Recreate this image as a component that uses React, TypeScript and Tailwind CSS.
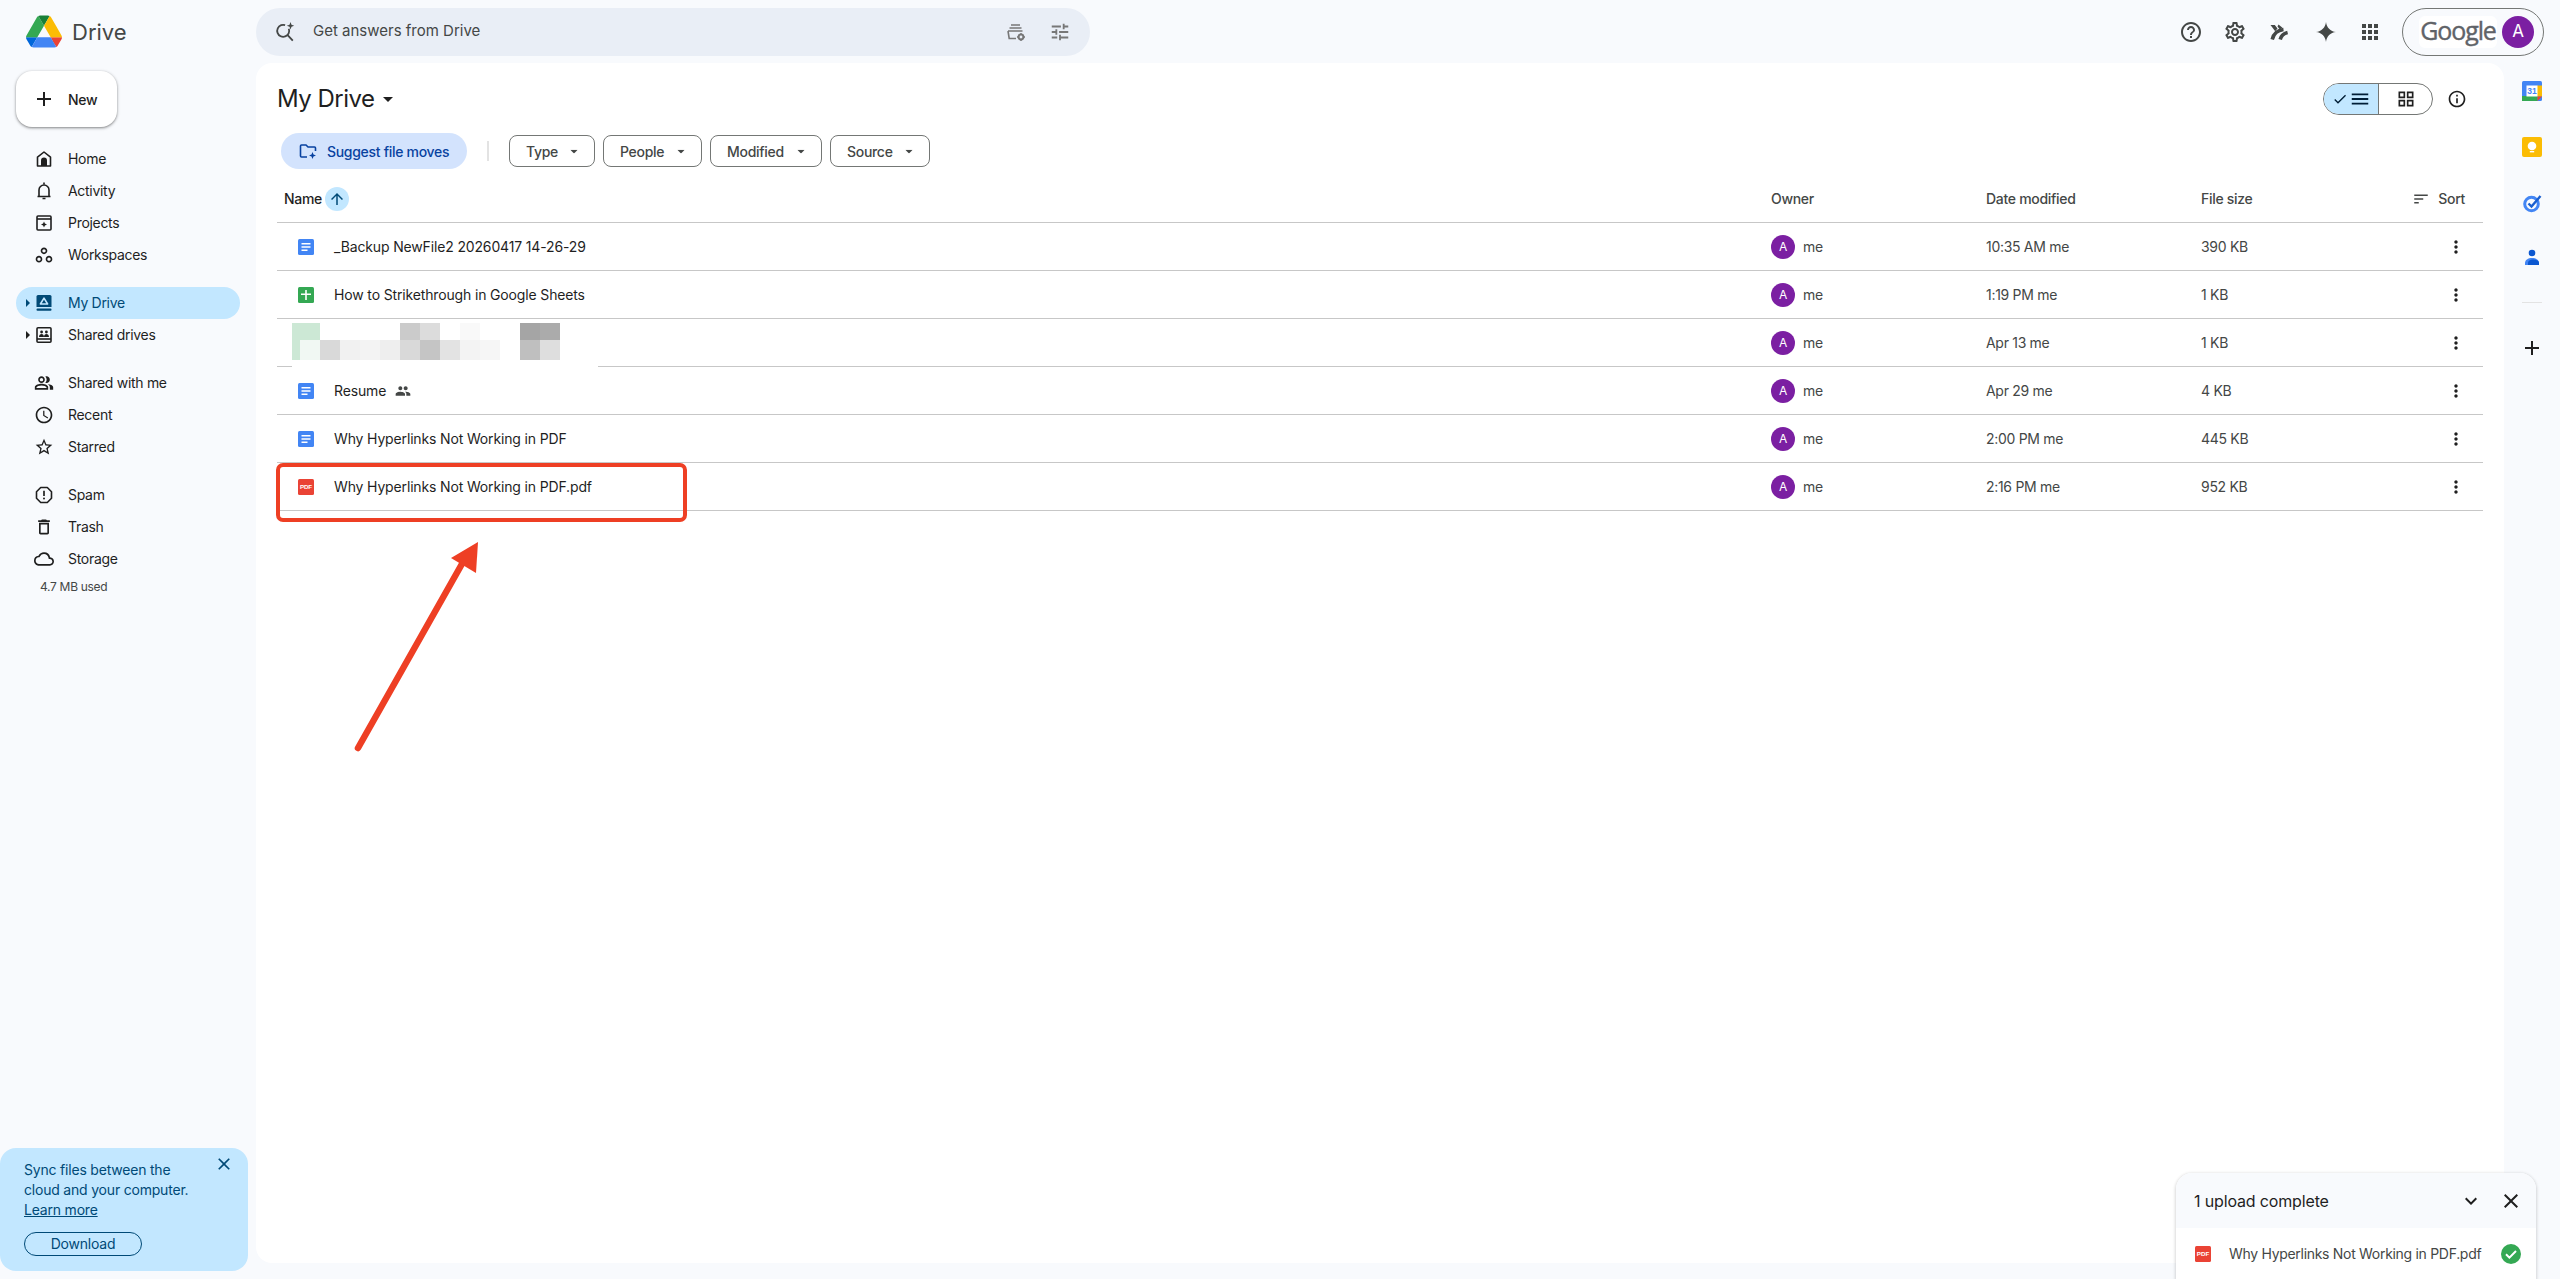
import React from "react";
import {
  MdOutlineWorkspaces, MdOutlinePeopleAlt, MdOutlineAccessTime, MdStarBorder, MdOutlineDelete, MdOutlineCloud,
  MdHelpOutline, MdOutlineSettings, MdApps, MdOutlineTune, MdAdd, MdClose, MdMoreVert, MdArrowUpward, MdCheck,
  MdMenu, MdOutlineGridView, MdInfoOutline, MdKeyboardArrowDown, MdPeople, MdSort,
} from "react-icons/md";

const font = "font-['Inter','Liberation_Sans',sans-serif]";

function Caret({ className = "" }: { className?: string }) {
  return (
    <svg width="10" height="5" viewBox="0 0 10 5" className={className}>
      <path d="M0 0h10L5 5z" fill="currentColor" />
    </svg>
  );
}

function DriveLogo() {
  return (
    <svg width="36" height="33" viewBox="0 0 87.3 78">
      <path d="m6.6 66.85 3.85 6.65c.8 1.4 1.95 2.5 3.3 3.3l13.75-23.8h-27.5c0 1.55.4 3.1 1.2 4.5z" fill="#0066da" />
      <path d="m43.65 25-13.75-23.8c-1.35.8-2.5 1.9-3.3 3.3l-25.4 44a9.06 9.06 0 0 0 -1.2 4.5h27.5z" fill="#34a853" />
      <path d="m73.55 76.8c1.35-.8 2.5-1.9 3.3-3.3l1.6-2.75 7.65-13.25c.8-1.4 1.2-2.95 1.2-4.5h-27.502l5.852 11.5z" fill="#ea4335" />
      <path d="m43.65 25 13.75-23.8c-1.35-.8-2.9-1.2-4.5-1.2h-18.5c-1.6 0-3.15.45-4.5 1.2z" fill="#188038" />
      <path d="m59.8 53h-32.3l-13.75 23.8c1.35.8 2.9 1.2 4.5 1.2h50.8c1.6 0 3.15-.45 4.5-1.2z" fill="#4285f4" />
      <path d="m73.4 26.5-12.7-22c-.8-1.4-1.95-2.5-3.3-3.3l-13.75 23.8 16.15 28h27.45c0-1.55-.4-3.1-1.2-4.5z" fill="#fbbc04" />
    </svg>
  );
}

function HomeIcon() {
  return (
    <svg width="20" height="20" viewBox="0 0 20 20" fill="none">
      <path d="M3.5 17V8.2L10 3l6.5 5.2V17z" stroke="#1f1f1f" strokeWidth="1.6" strokeLinejoin="round" />
      <path d="M7 17v-5.5a3 3 0 0 1 6 0V17z" fill="#1f1f1f" />
    </svg>
  );
}
function BellIcon() {
  return (
    <svg width="20" height="20" viewBox="0 0 20 20" fill="none">
      <path d="M5 15V9a5 5 0 0 1 10 0v6M3.5 15.5h13" stroke="#1f1f1f" strokeWidth="1.6" />
      <path d="M10 1.5v2M8.5 17.5h3" stroke="#1f1f1f" strokeWidth="1.6" />
    </svg>
  );
}
function ProjectsIcon() {
  return (
    <svg width="20" height="20" viewBox="0 0 20 20" fill="none">
      <rect x="3" y="3" width="14" height="14" rx="1" stroke="#1f1f1f" strokeWidth="1.6" />
      <path d="M3 6h14" stroke="#1f1f1f" strokeWidth="1.6" />
      <path d="M10 8.5l.9 2.1 2.1.9-2.1.9-.9 2.1-.9-2.1-2.1-.9 2.1-.9z" fill="#1f1f1f" />
    </svg>
  );
}
function MyDriveIcon() {
  return (
    <svg width="20" height="20" viewBox="0 0 20 20">
      <path d="M4 2h12a1.5 1.5 0 0 1 1.5 1.5V14H2.5V3.5A1.5 1.5 0 0 1 4 2z" fill="#004a77" />
      <rect x="2.5" y="15.5" width="15" height="2.2" rx="1" fill="#004a77" />
      <path d="M10 5.2l3.6 5.8H6.4z" fill="none" stroke="#c2e7ff" strokeWidth="1.6" strokeLinejoin="round" />
    </svg>
  );
}
function SharedDrivesIcon() {
  return (
    <svg width="20" height="20" viewBox="0 0 20 20" fill="none">
      <rect x="3" y="2.8" width="14" height="14.4" rx="1" stroke="#1f1f1f" strokeWidth="1.6" />
      <path d="M3 14h14" stroke="#1f1f1f" strokeWidth="1.6" />
      <circle cx="7.6" cy="7" r="1.4" fill="#1f1f1f" />
      <circle cx="12.4" cy="7" r="1.4" fill="#1f1f1f" />
      <path d="M5 12c0-2 1.2-3 2.6-3s2.4 1 2.4 3zM10 12c0-2 1-3 2.4-3S15 10 15 12z" fill="#1f1f1f" />
    </svg>
  );
}
function SpamIcon() {
  return (
    <svg width="20" height="20" viewBox="0 0 20 20" fill="none">
      <path d="M6.7 2.5h6.6l4.2 4.2v6.6l-4.2 4.2H6.7l-4.2-4.2V6.7z" stroke="#1f1f1f" strokeWidth="1.6" strokeLinejoin="round" />
      <path d="M10 5.8v5.2" stroke="#1f1f1f" strokeWidth="1.7" />
      <circle cx="10" cy="13.6" r="1" fill="#1f1f1f" />
    </svg>
  );
}
function SearchSpark() {
  return (
    <svg width="22" height="22" viewBox="0 0 22 22" fill="none">
      <circle cx="9.200" cy="9.800" r="6" stroke="#444746" strokeWidth="1.800" strokeDasharray="31.500 6.200" transform="rotate(-20 9.200 9.800)" />
      <path d="M13.600 14.200l5.200 5.400" stroke="#444746" strokeWidth="1.800" />
      <path d="M16.500 1l1 2.700 2.700 1-2.700 1-1 2.800-1-2.800-2.700-1 2.700-1z" fill="#444746" />
    </svg>
  );
}
function StorageGear() {
  return (
    <svg width="20" height="20" viewBox="0 0 20 20" fill="none">
      <path d="M5 3h9M3.500 6h12" stroke="#777" strokeWidth="1.500" />
      <path d="M2 9h14.500M2 9l1.200 7.500H10" stroke="#777" strokeWidth="1.600" />
      <circle cx="15" cy="15" r="2.400" stroke="#777" strokeWidth="2" />
      <path d="M15 11v1.200M15 17.800V19M11 15h1.200M17.800 15H19" stroke="#777" strokeWidth="1.400" />
    </svg>
  );
}
function SparkIcon() {
  return (
    <svg width="20" height="20" viewBox="0 0 20 20">
      <path d="M10 0c.6 5.6 4.4 9.4 10 10-5.6.6-9.4 4.4-10 10-.6-5.6-4.4-9.4-10-10C5.600 9.400 9.400 5.600 10 0z" fill="#444746" />
    </svg>
  );
}
function LabsIcon() {
  return (
    <svg width="20" height="20" viewBox="0 0 20 20" fill="none">
      <path d="M3.200 17.500C4.500 12 8.500 8.200 14.500 7.500" stroke="#444746" strokeWidth="3.600" />
      <path d="M11.200 17.500C12 14 14.500 11.500 18.600 10.500" stroke="#444746" strokeWidth="3.600" />
      <path d="M1.500 3h4.300l2.700 3.500-2.300 2.800zM9.500 2.500l4 3.300-2.700 1.700L8.500 4.600z" fill="#444746" />
    </svg>
  );
}
function SuggestIcon() {
  return (
    <svg width="20" height="20" viewBox="0 0 20 20" fill="none">
      <path d="M9 16H3.500a1 1 0 0 1-1-1V5a1 1 0 0 1 1-1h4.500l2 2H16.500a1 1 0 0 1 1 1v3" stroke="#0842a0" strokeWidth="1.600" />
      <path d="M14.500 11l1 2.500 2.500 1-2.500 1-1 2.500-1-2.500-2.500-1 2.500-1z" fill="#0842a0" />
    </svg>
  );
}
function FileIcon({ kind }: { kind: "doc" | "sheet" | "pdf" }) {
  if (kind === "doc")
    return (
      <svg width="16" height="16" viewBox="0 0 16 16" className="shrink-0">
        <rect width="16" height="16" rx="1.500" fill="#4285f4" />
        <path d="M3.500 4h9v1.600h-9zM3.500 7.200h9v1.600h-9zM3.500 10.400h6v1.600h-6z" fill="#fff" />
      </svg>
    );
  if (kind === "sheet")
    return (
      <svg width="16" height="16" viewBox="0 0 16 16" className="shrink-0">
        <rect width="16" height="16" rx="1.500" fill="#34a853" />
        <path d="M7.200 3h1.600v3.500H13v1.600H8.800V13H7.200V8.100H3V6.500h4.200z" fill="#fff" />
      </svg>
    );
  return (
    <svg width="16" height="16" viewBox="0 0 16 16" className="shrink-0">
      <rect width="16" height="16" rx="1.500" fill="#ea4335" />
      <text x="8" y="10.200" textAnchor="middle" fontSize="6.200" fontWeight="800" fill="#fff" fontFamily="Liberation Sans, sans-serif">PDF</text>
    </svg>
  );
}

function Avatar() {
  return (
    <div className={`${font} w-6 h-6 rounded-full bg-[#7b1fa2] text-white text-[12px] flex items-center justify-center`}>A</div>
  );
}

const navGroups: { icon: React.ReactNode; label: string; caret?: boolean; active?: boolean }[][] = [
  [
    { icon: <HomeIcon />, label: "Home" },
    { icon: <BellIcon />, label: "Activity" },
    { icon: <ProjectsIcon />, label: "Projects" },
    { icon: <MdOutlineWorkspaces size={20} color="#1f1f1f" />, label: "Workspaces" },
  ],
  [
    { icon: <MyDriveIcon />, label: "My Drive", caret: true, active: true },
    { icon: <SharedDrivesIcon />, label: "Shared drives", caret: true },
  ],
  [
    { icon: <MdOutlinePeopleAlt size={20} color="#1f1f1f" />, label: "Shared with me" },
    { icon: <MdOutlineAccessTime size={20} color="#1f1f1f" />, label: "Recent" },
    { icon: <MdStarBorder size={20} color="#1f1f1f" />, label: "Starred" },
  ],
  [
    { icon: <SpamIcon />, label: "Spam" },
    { icon: <MdOutlineDelete size={20} color="#1f1f1f" />, label: "Trash" },
    { icon: <MdOutlineCloud size={20} color="#1f1f1f" />, label: "Storage" },
  ],
];

const files: { kind: "doc" | "sheet" | "pdf"; name?: string; date: string; size: string; shared?: boolean }[] = [
  { kind: "doc", name: "_Backup NewFile2 20260417 14-26-29", date: "10:35 AM me", size: "390 KB" },
  { kind: "sheet", name: "How to Strikethrough in Google Sheets", date: "1:19 PM me", size: "1 KB" },
  { kind: "sheet", date: "Apr 13 me", size: "1 KB" },
  { kind: "doc", name: "Resume", date: "Apr 29 me", size: "4 KB", shared: true },
  { kind: "doc", name: "Why Hyperlinks Not Working in PDF", date: "2:00 PM me", size: "445 KB" },
  { kind: "pdf", name: "Why Hyperlinks Not Working in PDF.pdf", date: "2:16 PM me", size: "952 KB" },
];

const mosaicTop: [number, string][] = [
  [28, "bg-[#cce8d5]"], [80, "bg-white"], [20, "bg-[#cbcbcb]"], [20, "bg-[#dcdcdc]"], [20, "bg-white"],
  [20, "bg-[#f9f9f9]"], [40, "bg-white"], [20, "bg-[#a5a5a5]"], [20, "bg-[#ababab]"],
];
const mosaicBottom: [number, string][] = [
  [8, "bg-[#cce8d5]"], [20, "bg-[#f1f8f3]"], [20, "bg-[#d9d9d9]"], [20, "bg-[#f1f1f1]"], [20, "bg-[#f3f3f3]"],
  [20, "bg-[#eeeeee]"], [20, "bg-[#d9d9d9]"], [20, "bg-[#c5c5c5]"], [20, "bg-[#e3e3e3]"], [20, "bg-[#f3f3f3]"],
  [20, "bg-[#f6f6f6]"], [20, "bg-white"], [20, "bg-[#bfbfbf]"], [20, "bg-[#dedede]"],
];

function Mosaic() {
  return (
    <div className="relative h-full">
      <div className="absolute left-[15px] top-0 w-[306px] h-[48px] bg-white pt-[4px] z-10">
        <div className="flex h-[17px]">
          {mosaicTop.map(([w, c], i) => <div key={i} className={c} style={{ width: w }} />)}
        </div>
        <div className="flex h-[20px]">
          {mosaicBottom.map(([w, c], i) => <div key={i} className={c} style={{ width: w }} />)}
        </div>
      </div>
    </div>
  );
}

const chips: [string, string][] = [["Type", "w-[86px]"], ["People", "w-[99px]"], ["Modified", "w-[112px]"], ["Source", "w-[100px]"]];

const rowGrid = "grid grid-cols-[1fr_215px_215px_282px] items-center";

export default function App() {
  return (
    <div className={`${font} relative w-full h-[1279px] overflow-hidden bg-[#f8fafd] text-[#1f1f1f] flex flex-col`}>
      {/* top bar */}
      <header className="h-[63px] shrink-0 flex items-center">
        <div className="w-[256px] shrink-0 flex items-center pl-[26px] gap-[10px]">
          <DriveLogo />
          <span className="text-[22px] text-[#444746] leading-none">Drive</span>
        </div>
        <div className="w-[834px] h-[48px] rounded-full bg-[#e9eef6] flex items-center pl-[18px] pr-[19px]">
          <SearchSpark />
          <span className="ml-[17px] text-[15px] text-[#444746]">Get answers from Drive</span>
          <div className="ml-auto flex items-center gap-[23px]">
            <StorageGear />
            <MdOutlineTune size={22} color="#777" />
          </div>
        </div>
        <div className="ml-auto flex items-center pr-[16px]">
          <div className="flex items-center gap-[20px] mr-[20px]">
            <MdHelpOutline size={24} color="#444746" />
            <MdOutlineSettings size={24} color="#444746" />
            <div className="w-[24px] flex justify-center"><LabsIcon /></div>
            <div className="w-[24px] flex justify-center ml-[3px]"><SparkIcon /></div>
            <MdApps size={24} color="#444746" />
          </div>
          <div className="w-[142px] h-[48px] rounded-full border border-[#747775] flex items-center pl-[16px] gap-[5px]">
            <div className="w-[78px] h-[32px] bg-white rounded-md flex items-center justify-center pb-[3px]">
              <span className="font-['Open_Sans',sans-serif] text-[25px] tracking-[-1.100px] text-[#5f6368] leading-none [-webkit-text-stroke:0.4px_#5f6368]">Google</span>
            </div>
            <div className="w-8 h-8 rounded-full bg-[#7b1fa2] text-white text-[17px] flex items-center justify-center">A</div>
          </div>
        </div>
      </header>

      <div className="flex-1 flex min-h-0">
        {/* sidebar */}
        <aside className="w-[256px] shrink-0 flex flex-col pb-[8px]">
          <button className="ml-[16px] mt-[8px] w-[101px] h-[56px] rounded-2xl bg-white shadow-[0_1px_3px_1px_rgba(0,0,0,0.15),0_1px_2px_rgba(0,0,0,0.3)] flex items-center pl-[16px] gap-[12px] text-[14px] font-medium tracking-[-0.300px] text-[#1f1f1f]">
            <MdAdd size={24} />
            New
          </button>
          <nav className="mt-[16px] flex flex-col gap-[16px]">
            {navGroups.map((group, i) => (
              <div key={i} className="flex flex-col">
                {group.map((item) => (
                  <div
                    key={item.label}
                    className={`relative ml-[16px] w-[224px] h-[32px] rounded-full flex items-center pl-[18px] gap-[14px] text-[14px] tracking-[-0.300px] ${item.active ? "bg-[#c2e7ff] text-[#004a77]" : "text-[#1f1f1f]"}`}
                  >
                    {item.caret && (
                      <svg width="4" height="8" viewBox="0 0 4 8" className="absolute left-[10px] top-[12px]">
                        <path d="M0 0l4 4-4 4z" fill={item.active ? "#004a77" : "#1f1f1f"} />
                      </svg>
                    )}
                    {item.icon}
                    <span className="pb-[1px]">{item.label}</span>
                  </div>
                ))}
              </div>
            ))}
          </nav>
          <div className="ml-[40px] mt-[2px] text-[12px] leading-[20px] tracking-[-0.300px] text-[#444746]">4.7 MB used</div>

          <div className="mt-auto w-[248px] h-[123px] bg-[#c2e7ff] rounded-2xl pl-[24px] pt-[12px] relative text-[#004a77] text-[14px] leading-[20px] tracking-[-0.200px]">
            <MdClose size={20} className="absolute right-[14px] top-[6px]" />
            <div>Sync files between the</div>
            <div>cloud and your computer.</div>
            <div className="underline">Learn more</div>
            <button className="mt-[12px] w-[118px] h-[24px] rounded-full border border-[#004a77] flex items-center justify-center">Download</button>
          </div>
        </aside>

        {/* main */}
        <main className="flex-1 min-w-0 bg-white rounded-2xl mb-[16px] px-[21px] pt-[16px]">
          <div className="h-[40px] flex items-center">
            <h1 className="text-[24px] tracking-[-0.500px] font-normal leading-none text-[#1f1f1f]">My Drive</h1>
            <Caret className="ml-[8px] text-[#1f1f1f]" />
            <div className="ml-auto flex items-center">
              <div className="flex w-[110px] h-[32px] rounded-full border border-[#747775] overflow-hidden">
                <div className="w-[55px] bg-[#c2e7ff] border-r border-[#747775] flex items-center justify-center text-[#001d35] gap-[1px]">
                  <MdCheck size={16} />
                  <MdMenu size={22} />
                </div>
                <div className="flex-1 flex items-center justify-center text-[#1f1f1f]">
                  <MdOutlineGridView size={20} />
                </div>
              </div>
              <MdInfoOutline size={20} className="ml-[14px] mr-[16px]" />
            </div>
          </div>

          <div className="mt-[14px] h-[36px] flex items-center pl-[4px]">
            <button className="w-[186px] h-[36px] rounded-full bg-[#d3e3fd] flex items-center pl-[17px] gap-[9px] text-[14px] font-medium tracking-[-0.300px] text-[#0842a0]">
              <SuggestIcon />
              Suggest file moves
            </button>
            <div className="ml-[20px] w-[2px] h-[20px] bg-[#e3e3e3]" />
            <div className="ml-[20px] flex gap-[8px]">
              {chips.map(([c, w]) => (
                <div key={c} className={`${w} h-[32px] rounded-lg border border-[#747775] flex items-center justify-between pl-[16px] pr-[15px] text-[14px] font-medium tracking-[-0.300px] text-[#444746]`}>
                  {c}
                  <Caret className="scale-75" />
                </div>
              ))}
            </div>
          </div>

          <div className={`${rowGrid} mt-[7px] h-[47px] border-b border-[#c7c7c7] text-[14px] font-medium tracking-[-0.300px] text-[#444746]`}>
            <div className="flex items-center pl-[7px] text-[#1f1f1f]">
              <span className="pb-[1px]">Name</span>
              <span className="ml-[3px] w-[24px] h-[24px] shrink-0 rounded-full bg-[#c2e7ff] flex items-center justify-center text-[#004a77]">
                <MdArrowUpward size={18} />
              </span>
            </div>
            <div className="pb-[1px]">Owner</div>
            <div className="pb-[1px]">Date modified</div>
            <div className="flex items-center justify-end pr-[18px] pb-[1px]">
              <span className="mr-auto">File size</span>
              <MdSort size={18} />
              <span className="ml-[8px]">Sort</span>
            </div>
          </div>

          {files.map((f, i) => (
            <div key={i} className={`${rowGrid} relative h-[48px] border-b border-[#c7c7c7] text-[14px] tracking-[-0.300px] text-[#444746]`}>
              {f.name ? (
                <div className="flex items-center pl-[21px] gap-[20px] tracking-[-0.150px] text-[#1f1f1f]">
                  <FileIcon kind={f.kind} />
                  <span>{f.name}</span>
                  {f.shared && <MdPeople size={16} className="-ml-[11px] text-[#444746]" />}
                </div>
              ) : (
                <Mosaic />
              )}
              <div className="flex items-center gap-[8px]"><Avatar /><span>me</span></div>
              <div>{f.date}</div>
              <div className="flex items-center justify-between pr-[17px]">
                <span>{f.size}</span>
                <MdMoreVert size={20} className="text-[#1f1f1f]" />
              </div>
            </div>
          ))}
        </main>

        {/* right rail */}
        <aside className="w-[56px] shrink-0 flex flex-col items-center pt-[18px]">
          <svg width="20" height="20" viewBox="0 0 20 20">
            <rect width="20" height="20" rx="1.500" fill="#4285f4" />
            <rect x="15" y="4.500" width="5" height="11" fill="#fbbc04" />
            <rect y="15" width="15.500" height="5" fill="#34a853" />
            <path d="M15.500 15.500H20L15.500 20z" fill="#ea4335" />
            <rect x="4.500" y="4.500" width="11" height="11" fill="#fff" />
            <text x="10" y="13.200" textAnchor="middle" fontSize="8.500" fontWeight="700" fill="#4285f4" fontFamily="Liberation Sans, sans-serif">31</text>
          </svg>
          <svg width="20" height="20" viewBox="0 0 20 20" className="mt-[36px]">
            <rect width="20" height="20" rx="2" fill="#fbbc04" />
            <circle cx="10" cy="9" r="4.300" fill="#fff" />
            <rect x="7.800" y="14" width="4.400" height="1.400" fill="#fff" />
          </svg>
          <svg width="20" height="20" viewBox="0 0 20 20" className="mt-[36px]">
            <circle cx="9.500" cy="11" r="6.800" fill="none" stroke="#4285f4" strokeWidth="3" />
            <path d="M6.500 10.500l3 3L18.500 3" fill="none" stroke="#1a5fd0" strokeWidth="2.400" />
          </svg>
          <svg width="20" height="20" viewBox="0 0 20 20" className="mt-[35px]">
            <circle cx="10" cy="5" r="3.300" fill="#0b57d0" />
            <path d="M3 17v-2c0-3 3-5 7-5s7 2 7 5v2z" fill="#4285f4" />
            <path d="M6 17v-2c0-2 2-3.500 5-3.500 2 0 6 .5 6 3.500v2z" fill="#0b57d0" />
          </svg>
          <div className="mt-[34px] w-[20px] h-px bg-[#e3e3e3]" />
          <MdAdd size={24} className="mt-[33px] text-[#1f1f1f]" />
        </aside>
      </div>

      {/* upload panel */}
      <div className="absolute left-[2176px] top-[1173px] w-[360px] h-[106px] rounded-t-2xl bg-white shadow-[0_1px_3px_1px_rgba(0,0,0,0.15)] overflow-hidden z-20">
        <div className="h-[55px] bg-[#f8fafd] flex items-center pl-[18px] pr-[13px]">
          <span className="text-[16px] tracking-[-0.150px] text-[#1f1f1f]">1 upload complete</span>
          <MdKeyboardArrowDown size={24} className="ml-auto" />
          <MdClose size={24} className="ml-[16px]" />
        </div>
        <div className="h-[51px] flex items-center pl-[19px] pr-[15px]">
          <FileIcon kind="pdf" />
          <span className="ml-[18px] text-[14px] tracking-[-0.300px] text-[#444746]">Why Hyperlinks Not Working in PDF.pdf</span>
          <svg width="20" height="20" viewBox="0 0 20 20" className="ml-auto">
            <circle cx="10" cy="10" r="10" fill="#34a853" />
            <path d="M5 10.300l3.400 3.400L15 7" fill="none" stroke="#fff" strokeWidth="2" />
          </svg>
        </div>
      </div>

      {/* annotation */}
      <div className="absolute left-[276px] top-[463px] w-[411px] h-[59px] rounded-[7px] border-[4.500px] border-[#ee3f24] z-20" />
      <svg className="absolute left-[340px] top-[530px] z-20" width="150" height="230" viewBox="340 530 150 230">
        <path d="M358 748L467 555" stroke="#ee3f24" strokeWidth="6.500" strokeLinecap="round" />
        <path d="M478 542L451 558L476 573z" fill="#ee3f24" />
      </svg>
    </div>
  );
}
